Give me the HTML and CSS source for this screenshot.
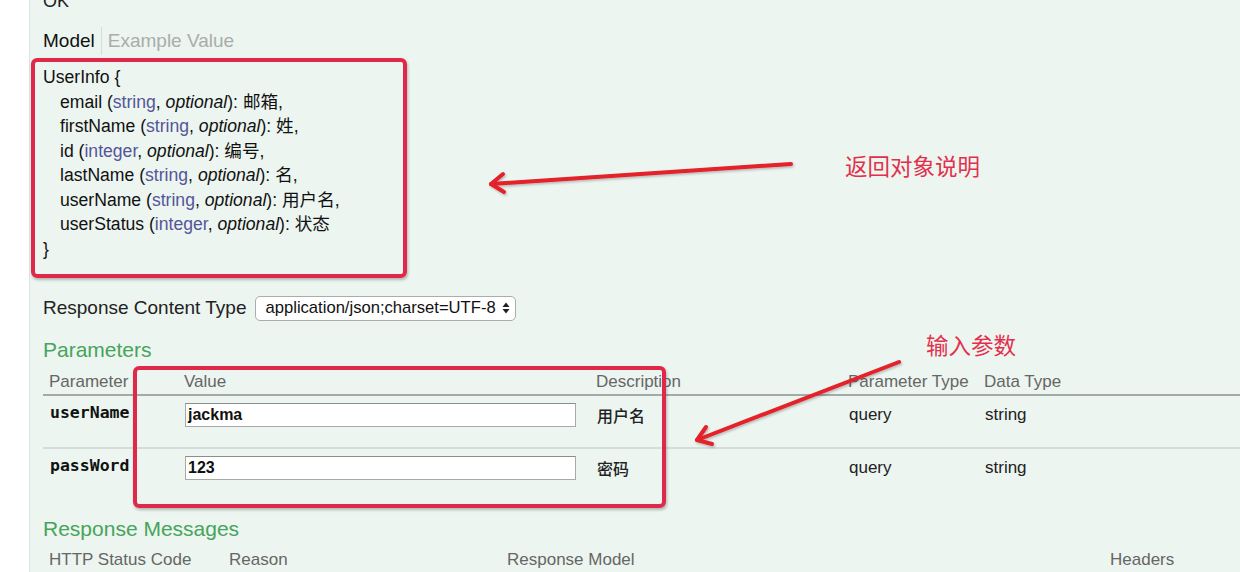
FILE: index.html
```html
<!DOCTYPE html>
<html lang="zh-CN">
<head>
<meta charset="utf-8">
<title>Swagger Response</title>
<link rel="stylesheet" href="styles.css">
</head>
<body>
<div class="page">
  <div class="gutter"></div>
  <main class="op">
    <div class="status">OK</div>
    <div class="tabs">
      <span class="tab active">Model</span>
      <span class="tab muted">Example Value</span>
    </div>
    <div class="model">
      <div class="mline">UserInfo {</div>
      <div class="mline ind">email (<span class="type">string</span>, <i>optional</i>): 邮箱,</div>
      <div class="mline ind">firstName (<span class="type">string</span>, <i>optional</i>): 姓,</div>
      <div class="mline ind">id (<span class="type">integer</span>, <i>optional</i>): 编号,</div>
      <div class="mline ind">lastName (<span class="type">string</span>, <i>optional</i>): 名,</div>
      <div class="mline ind">userName (<span class="type">string</span>, <i>optional</i>): 用户名,</div>
      <div class="mline ind">userStatus (<span class="type">integer</span>, <i>optional</i>): 状态</div>
      <div class="mline">}</div>
    </div>
    <div class="ctype">
      <span class="ctype-label">Response Content Type</span>
      <div class="select">
        <span>application/json;charset=UTF-8</span>
        <svg class="updown" width="8" height="12" viewBox="0 0 8 12"><path d="M4 0.5 L7.5 5 H0.5 Z M4 11.5 L7.5 7 H0.5 Z" fill="#222"/></svg>
      </div>
    </div>
    <h4 class="sect">Parameters</h4>
    <div class="ptable">
      <div class="prow phead">
        <div class="c first">Parameter</div>
        <div class="c">Value</div>
        <div class="c">Description</div>
        <div class="c">Parameter Type</div>
        <div class="c">Data Type</div>
      </div>
      <div class="prow pbody sep">
        <div class="c first code">userName</div>
        <div class="c"><div class="input">jackma</div></div>
        <div class="c desc">用户名</div>
        <div class="c">query</div>
        <div class="c">string</div>
      </div>
      <div class="prow pbody">
        <div class="c first code">passWord</div>
        <div class="c"><div class="input">123</div></div>
        <div class="c desc">密码</div>
        <div class="c">query</div>
        <div class="c">string</div>
      </div>
    </div>
    <h4 class="sect sect2">Response Messages</h4>
    <div class="rhead">
      <div class="c first">HTTP Status Code</div>
      <div class="c">Reason</div>
      <div class="c">Response Model</div>
      <div class="c">Headers</div>
    </div>

    <div class="hl-box"></div>
    <div class="note note1">返回对象说明</div>
    <div class="note note2">输入参数</div>
    <svg class="arrows" width="1240" height="572" viewBox="0 0 1240 572">
      <defs>
        <filter id="sh" x="-10%" y="-10%" width="120%" height="120%">
          <feDropShadow dx="1" dy="1.5" stdDeviation="1" flood-color="#000" flood-opacity="0.25"/>
        </filter>
      </defs>
      <g fill="none" stroke="#e3202a" stroke-width="4" stroke-linecap="round" stroke-linejoin="round" filter="url(#sh)">
        <path d="M791 164 L491 184"/>
        <path d="M503 174 L491 184 L504 192"/>
        <path d="M899 362 L697 440"/>
        <path d="M706 427 L697 440 L712 444"/>
      </g>
    </svg>
  </main>
</div>
</body>
</html>
```
FILE: styles.css
```css
* { box-sizing: border-box; }
html, body {
  margin: 0;
  padding: 0;
  background: #ffffff;
  overflow: hidden;
}
body {
  font-family: "Liberation Sans", Arial, "Noto Sans CJK SC", sans-serif;
  color: #222;
  width: 1240px;
  height: 572px;
}
.page {
  display: flex;
  height: 572px;
}
.gutter {
  width: 29px;
  flex: none;
  background: #fff;
}
.op {
  position: relative;
  flex: 1;
  background: #ecf5f0;
  border-left: 1px solid #d6e6dc;
  padding-left: 13px;
}
.status {
  font-size: 18px;
  line-height: 20px;
  margin-top: -9px;
  color: #222;
}
.tabs {
  margin-top: 19px;
  display: flex;
  align-items: center;
  height: 22px;
  font-size: 19px;
}
.tab.active {
  color: #111;
  padding-right: 6px;
  border-right: 1px solid #d8dcda;
  height: 28px;
  line-height: 28px;
}
.tab.muted {
  color: #a9adab;
  padding-left: 6px;
}
.model {
  margin-top: 6px;
  margin-left: -12px;
  width: 376px;
  border: 4px solid #e0284a;
  border-radius: 6px;
  box-shadow: 1px 2px 3px rgba(0,0,0,0.25);
  padding: 3px 8px 13px 8px;
  font-size: 17.6px;
  line-height: 24.5px;
  color: #111;
}
.mline.ind { padding-left: 17px; }
.type { color: #55559a; }
.model i { font-style: italic; }
.ctype {
  margin-top: 18px;
  display: flex;
  align-items: center;
  height: 24px;
  gap: 8px;
}
.ctype-label {
  font-size: 19px;
  color: #222;
}
.select {
  width: 261px;
  height: 25px;
  background: #fff;
  border: 1px solid #a9adab;
  border-radius: 5px;
  display: flex;
  align-items: center;
  justify-content: space-between;
  padding: 0 5px 0 10px;
  font-size: 16.6px;
  color: #111;
}
.updown { display: block; }
.sect {
  margin: 18px 0 0 0;
  font-weight: normal;
  font-size: 21px;
  line-height: 24px;
  color: #47a45b;
}
.ptable { margin-top: 6px; }
.prow {
  display: grid;
  grid-template-columns: 136px 412px 252px 136px 1fr;
}
.phead {
  font-size: 17px;
  line-height: 20px;
  color: #666;
  padding: 4px 0 2px;
  border-bottom: 2px solid #a4aaa7;
}
.phead .c { padding-left: 5px; }
.phead .c.first { padding-left: 6px; }
.pbody {
  font-size: 17px;
  color: #222;
  padding: 7px 0 20px;
  align-items: center;
}
.pbody.sep { border-bottom: 2px solid #d3dcd8; }
.pbody .c { padding-left: 6px; line-height: 24px; }
.pbody .c.first { padding-left: 7px; }
.code {
  font-family: "DejaVu Sans Mono", "Liberation Mono", monospace;
  font-weight: bold;
  font-size: 16.5px;
  margin-top: -4px;
  color: #111;
}
.desc {
  font-family: "Noto Sans CJK SC", sans-serif;
  font-weight: 500;
  font-size: 16px;
}
.input {
  width: 391px;
  height: 24px;
  background: #fff;
  border: 1px solid #a9a9a9;
  border-top-color: #8d8d8d;
  font-weight: bold;
  font-size: 16px;
  line-height: 22px;
  padding-left: 2px;
  color: #111;
}
.sect2 { margin-top: 17px; }
.rhead {
  margin-top: 9px;
  display: grid;
  grid-template-columns: 181px 278px 603px 1fr;
  font-size: 17px;
  line-height: 20px;
  color: #666;
}
.rhead .c { padding-left: 5px; }
.rhead .c.first { padding-left: 6px; }

/* annotation overlays */
.hl-box {
  position: absolute;
  left: 103px;
  top: 366px;
  width: 533px;
  height: 142px;
  border: 4px solid #e0284a;
  border-radius: 6px;
  box-shadow: 1px 2px 3px rgba(0,0,0,0.25);
}
.note {
  position: absolute;
  font-family: "Noto Sans CJK SC", sans-serif;
  font-size: 22.5px;
  line-height: 26px;
  color: #e2304c;
}
.note1 { left: 815px; top: 152px; }
.note2 { left: 896px; top: 331px; }
.arrows {
  position: absolute;
  left: -30px;
  top: 0;
  pointer-events: none;
}
```
